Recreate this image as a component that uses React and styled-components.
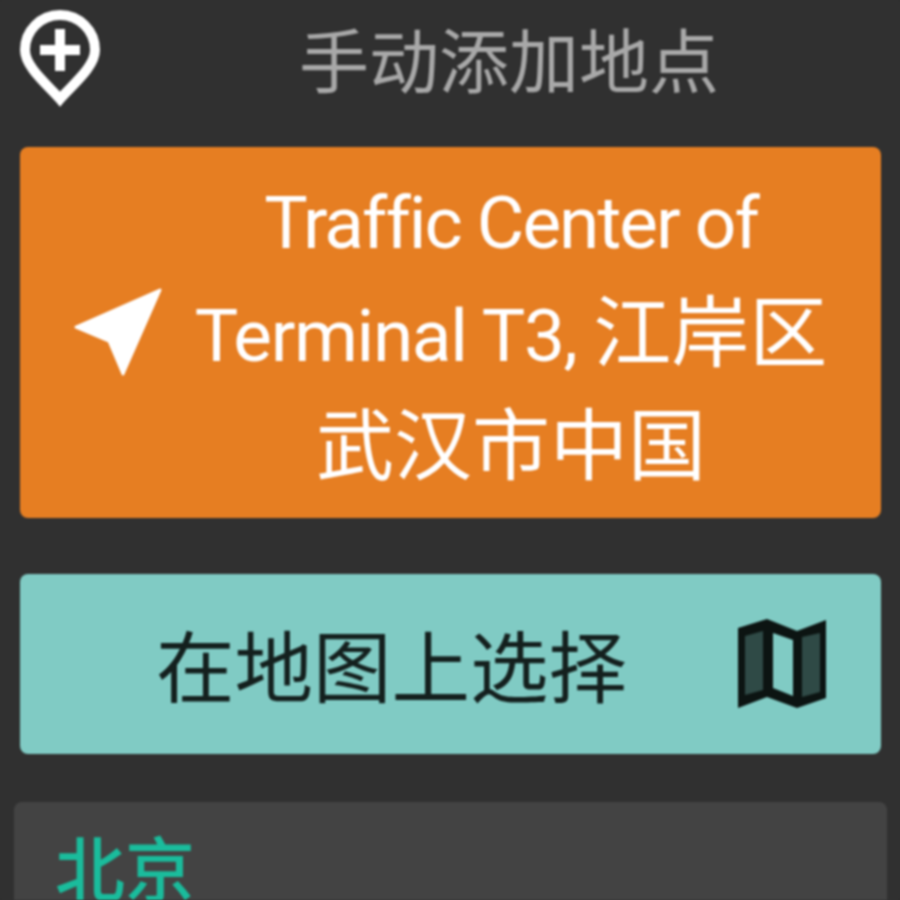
import styled, { createGlobalStyle } from 'styled-components'

const GlobalStyle = createGlobalStyle`
  html, body {
    margin: 0;
    height: 900px;
    overflow: hidden;
    background: #303030;
  }
`

const Screen = styled.div`
  width: 900px;
  height: 900px;
  overflow: hidden;
  box-sizing: border-box;
  background: #303030;
  font-family: Roboto, "Noto Sans CJK SC", sans-serif;
  filter: blur(0.8px);
`

const Header = styled.div`
  height: 147px;
  display: flex;
  padding: 9px 0 0 20px;
  box-sizing: border-box;
`

const HeaderTitle = styled.div`
  margin-left: 199px;
  margin-top: 10px;
  color: #a8a8a8;
  font-size: 70px;
  line-height: 90px;
`

const Actions = styled.div`
  display: flex;
  flex-direction: column;
  padding: 0 19px 0 20px;
`

const ActionCard = styled.div`
  display: flex;
  align-items: center;
  box-sizing: border-box;
  height: ${p => p.$height}px;
  margin-bottom: ${p => p.$gap}px;
  border-radius: 8px;
  background: ${p => p.$bg};
  color: ${p => p.$color};
`

const LocationText = styled.div`
  width: 660px;
  margin: 4px 0 0 16px;
  text-align: center;
  font-size: 78px;
  line-height: 112px;
`

const Latin = styled.span`
  font-size: 73px;
  letter-spacing: ${p => p.$spacing}px;
`

const MapText = styled.div`
  margin-left: 136px;
  margin-top: 12px;
  font-size: 78.5px;
  line-height: 100px;
`

const CityList = styled.div`
  margin: 0 13px 0 14px;
  height: 120px;
  padding: 20px 0 0 41px;
  box-sizing: border-box;
  border-radius: 8px;
  background: #434343;
`

const CityName = styled.div`
  color: #1abc9c;
  font-size: 70px;
  line-height: 100px;
  font-weight: 500;
`

const ArrowSvg = styled.svg`
  flex: none;
  margin-left: 53px;
`

const MapSvg = styled.svg`
  flex: none;
  margin-left: auto;
  margin-right: 52px;
`

const PinPlusIcon = () => (
  <svg width="80" height="100" viewBox="0 0 80 100">
    <path d="M40 90C28 76 5 58 5 41A35 35 0 0 1 75 41C75 58 52 76 40 90Z" fill="none" stroke="#fff" strokeWidth="10" />
    <path d="M40 20V62M20 41H60" stroke="#fff" strokeWidth="10" fill="none" />
  </svg>
)

const ArrowIcon = () => (
  <ArrowSvg width="92" height="92" viewBox="0 0 92 92">
    <path d="M3 40L87 3L50 87L36 54Z" fill="#fff" stroke="#fff" strokeWidth="3" strokeLinejoin="round" />
  </ArrowSvg>
)

const MapIcon = () => (
  <MapSvg width="92" height="92" viewBox="0 0 92 92">
    <path d="M1 10L30 1L60 13L89 2V80L60 90L30 79L1 90Z" fill="#0c1412" />
    <path d="M8 18L26 13V72L8 77Z" fill="#2f4a46" />
    <path d="M36 15L56 22V78L36 70Z" fill="#80cbc4" />
    <path d="M65 19L83 15V74L65 79Z" fill="#2f4a46" />
  </MapSvg>
)

export default function App() {
  return (
    <Screen>
      <GlobalStyle />
      <Header>
        <PinPlusIcon />
        <HeaderTitle>手动添加地点</HeaderTitle>
      </Header>
      <Actions>
        <ActionCard $height={371} $gap={56} $bg="#e67e22" $color="#fff">
          <ArrowIcon />
          <LocationText>
            <Latin $spacing={-2}>Traffic Center of </Latin>
            <Latin $spacing={-1.4}>Terminal T3, </Latin>江岸区武汉市中国
          </LocationText>
        </ActionCard>
        <ActionCard $height={180} $gap={48} $bg="#80cbc4" $color="#14201e">
          <MapText>在地图上选择</MapText>
          <MapIcon />
        </ActionCard>
      </Actions>
      <CityList>
        <CityName>北京</CityName>
      </CityList>
    </Screen>
  )
}
